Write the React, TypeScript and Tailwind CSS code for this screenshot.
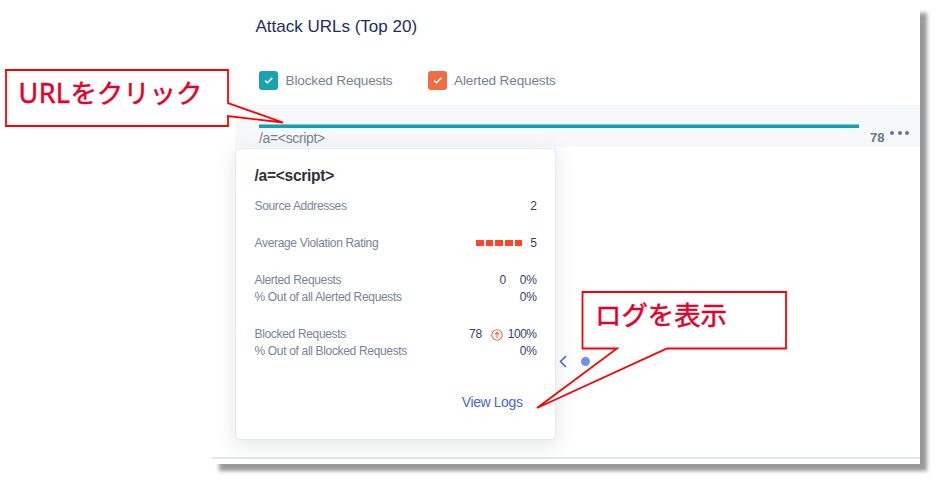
import type { ReactNode } from 'react';

function Checkbox({ label, color, gap }: { label: string; color: string; gap: string }) {
  return (
    <label className={`flex items-center ${gap}`}>
      <span className={`flex h-[19px] w-[19px] items-center justify-center rounded-[3px] ${color}`}>
        <svg width="19" height="19" viewBox="0 0 19 19" fill="none" stroke="white" strokeWidth="1.5">
          <path d="M6 9.6 L8.4 11.8 L13.3 6.9" />
        </svg>
      </span>
      <span className="pt-px text-[13.6px] leading-5 tracking-[-0.16px] whitespace-nowrap text-[#77818f]">{label}</span>
    </label>
  );
}

function StatRow({ label, className, children }: { label: string; className?: string; children: ReactNode }) {
  return (
    <div className={`flex h-[17px] items-center justify-between ${className ?? ''}`}>
      <span className="text-[#79839a]">{label}</span>
      <span className="flex items-center text-[#343f6b]">{children}</span>
    </div>
  );
}

function DetailsCard() {
  return (
    <div className="absolute top-[142px] left-[23px] flex h-[292px] w-[321px] flex-col rounded-[4px] border border-[#e6e9f1] bg-white pr-[18.5px] pl-[18.5px] pt-[17px] text-[12px] leading-[17px] tracking-[-0.33px] shadow-[0_5px_20px_rgba(70,75,95,0.15)]">
      <h2 className="text-[15.6px] leading-5 font-bold tracking-[-0.3px] text-[#303236]">/a=&lt;script&gt;</h2>
      <StatRow label="Source Addresses" className="mt-[12px]">2</StatRow>
      <StatRow label="Average Violation Rating" className="mt-[20px]">
        <span className="mr-[8px] mb-[2px] flex gap-[2px]">
          {[0, 1, 2, 3, 4].map((n) => (
            <span key={n} className="h-[6px] w-[7.6px] bg-[#ff4527]" />
          ))}
        </span>
        5
      </StatRow>
      <StatRow label="Alerted Requests" className="mt-[20px]">
        <span className="mr-[14px]">0</span>0%
      </StatRow>
      <StatRow label="% Out of all Alerted Requests">0%</StatRow>
      <StatRow label="Blocked Requests" className="mt-[20px]">
        <span>78</span>
        <svg className="mr-[5px] ml-[9px]" width="12" height="12" viewBox="0 0 12 12" fill="none" stroke="#f4694f" strokeWidth="1.1">
          <circle cx="6" cy="6" r="5.2" />
          <path d="M6 9 V3.5 M3.9 5.5 L6 3.4 L8.1 5.5" />
        </svg>
        <span className="tracking-[-0.5px]">100%</span>
      </StatRow>
      <StatRow label="% Out of all Blocked Requests">0%</StatRow>
      <a className="mt-[32px] mr-[14px] self-end text-[14px] leading-5 tracking-[-0.4px] text-[#4d65cb]">View Logs</a>
    </div>
  );
}

export default function App() {
  return (
    <div className="relative h-[480px] w-[946px] overflow-hidden bg-white pt-[6px] font-['Liberation_Sans',Arial,sans-serif]">
      <main className="relative ml-[212px] flex h-[458px] w-[708px] flex-col bg-white shadow-[7px_7px_4px_rgba(0,0,0,0.4)]">
        <h1 className="mt-[9px] ml-[43.5px] text-[17px] leading-6 text-[#1d2b5e]">Attack URLs (Top 20)</h1>
        <div className="mt-[32px] ml-[47px] flex h-[19px] items-center">
          <div className="w-[169px]">
            <Checkbox label="Blocked Requests" color="bg-[#19a3b1]" gap="gap-[7.5px]" />
          </div>
          <Checkbox label="Alerted Requests" color="bg-[#ee6d43]" gap="gap-[7px]" />
        </div>
        <div className="mt-[15px] ml-[23px] h-[42px] bg-[#f7f8fa] pt-[19px] pl-[24px]">
          <div className="h-[4px] w-[600px] border-t border-[#7dcbd3] bg-[#12a1af]" />
          <div className="flex h-[19px] items-center">
            <span className="w-[611px] text-[14px] leading-[18px] tracking-[-0.35px] text-[#77818f]">/a=&lt;script&gt;</span>
            <span className="text-[13px] leading-[18px] font-bold text-[#68758d]">78</span>
            <span className="mb-[10px] ml-[6px] flex gap-[3.3px]">
              <i className="h-[4px] w-[4px] rounded-full bg-[#66729c]" />
              <i className="h-[4px] w-[4px] rounded-full bg-[#66729c]" />
              <i className="h-[4px] w-[4px] rounded-full bg-[#66729c]" />
            </span>
          </div>
        </div>
        <div className="mt-auto mb-[5px] h-[2px] bg-[#e2e6f0]" />
        <DetailsCard />
        <div className="absolute top-[349px] left-[347px] flex items-center gap-[13px]">
          <svg width="9" height="13" viewBox="0 0 9 13" fill="none" stroke="#4661c9" strokeWidth="1.5">
            <path d="M7 1 L1.5 6.5 L7 12" />
          </svg>
          <span className="h-[9px] w-[9px] rounded-full bg-[#6f8ff7]" />
        </div>
      </main>

      <svg className="absolute inset-0" width="946" height="480" viewBox="0 0 946 480" fill="white" stroke="#ff0000" strokeWidth="1.8">
        <path d="M6 70 H228 V103 L283 122.5 L228 116 V126 H6 Z" />
        <path d="M582.5 292 H786 V348.5 H667 L537 408 L617 348.5 H582.5 Z" />
      </svg>
      <div className="absolute top-[74px] left-[18.5px] font-['Noto_Sans_CJK_JP',sans-serif] text-[26.4px] leading-[36px] whitespace-nowrap text-[#e4002b] [-webkit-text-stroke:0.5px_#e4002b]">
        <span className="font-['Noto_Sans','Open_Sans',sans-serif] text-[27px] tracking-[0.4px]">URL</span>をクリック
      </div>
      <div className="absolute top-[296px] left-[595px] font-['Noto_Sans_CJK_JP',sans-serif] text-[26.4px] leading-[36px] whitespace-nowrap text-[#e4002b] [-webkit-text-stroke:0.5px_#e4002b]">
        ログを表示
      </div>
    </div>
  );
}
